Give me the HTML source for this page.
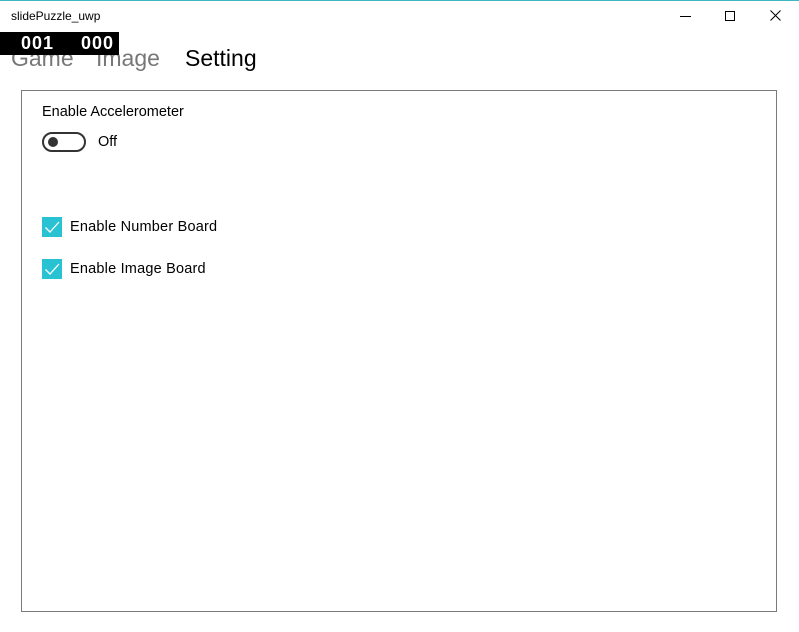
<!DOCTYPE html>
<html><head><style>
body{margin:0;width:799px;height:632px;background:#fff;position:relative;overflow:hidden;font-family:"Liberation Sans",sans-serif;}
.a{position:absolute;white-space:nowrap;}
</style></head><body>
<div class="a" style="left:0;top:0;width:799px;height:1px;background:#3db8c0"></div>
<div class="a" style="left:11px;top:9px;font-size:12px;color:#000">slidePuzzle_uwp</div>
<div class="a" style="left:680px;top:16px;width:11px;height:1px;background:#000"></div>
<div class="a" style="left:725px;top:11px;width:8px;height:8px;border:1px solid #000"></div>
<svg class="a" style="left:770px;top:10px" width="11" height="11"><path d="M0.5 0.5L10.5 10.5M10.5 0.5L0.5 10.5" stroke="#000" stroke-width="1"/></svg>
<div class="a" style="left:11px;top:45px;font-size:23px;color:#777">Game</div>
<div class="a" style="left:96px;top:45px;font-size:23px;color:#777">Image</div>
<div class="a" style="left:185px;top:45px;font-size:23px;color:#000">Setting</div>
<div class="a" style="left:0;top:32px;width:119px;height:23px;background:#000"></div>
<div class="a" style="left:21px;top:32px;font-size:18px;font-weight:bold;color:#fff;line-height:23px;letter-spacing:1px">001</div>
<div class="a" style="left:81px;top:32px;font-size:18px;font-weight:bold;color:#fff;line-height:23px;letter-spacing:1px">000</div>
<div class="a" style="left:21px;top:90px;width:754px;height:520px;border:1px solid #7a7a7a"></div>
<div class="a" style="left:42px;top:104px;font-size:14.5px;color:#000">Enable Accelerometer</div>
<div class="a" style="left:42px;top:132px;border:2px solid #333;border-radius:10px;box-sizing:border-box;width:44px;height:20px"></div>
<div class="a" style="left:48px;top:137px;width:10px;height:10px;border-radius:50%;background:#333"></div>
<div class="a" style="left:98px;top:134px;font-size:14.5px;color:#000">Off</div>
<div class="a" style="left:42px;top:217px;width:20px;height:20px;background:#29c2d2"></div>
<svg class="a" style="left:42px;top:217px" width="20" height="20"><path d="M3.5 10.5L8 15L17 5" fill="none" stroke="#fff" stroke-width="1.3"/></svg>
<div class="a" style="left:70px;top:219px;font-size:14.5px;color:#000;letter-spacing:0.2px">Enable Number Board</div>
<div class="a" style="left:42px;top:259px;width:20px;height:20px;background:#29c2d2"></div>
<svg class="a" style="left:42px;top:259px" width="20" height="20"><path d="M3.5 10.5L8 15L17 5" fill="none" stroke="#fff" stroke-width="1.3"/></svg>
<div class="a" style="left:70px;top:261px;font-size:14.5px;color:#000;letter-spacing:0.2px">Enable Image Board</div>
</body></html>
